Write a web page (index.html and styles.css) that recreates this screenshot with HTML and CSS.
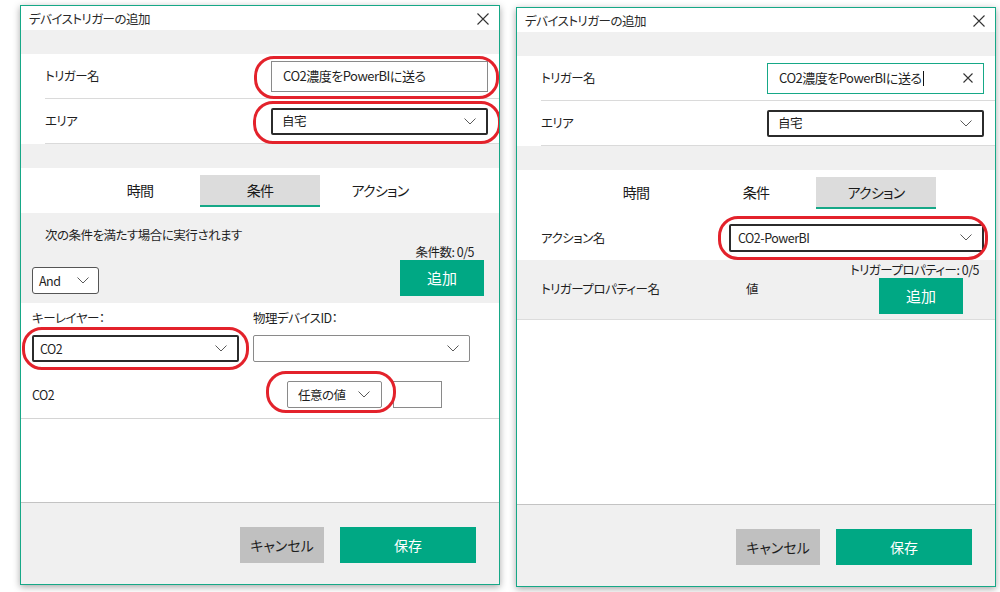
FILE: index.html
```html
<!DOCTYPE html>
<html lang="ja">
<head>
<meta charset="utf-8">
<title>デバイストリガーの追加</title>
<link rel="stylesheet" href="styles.css">
</head>
<body>
<div class="stage">

  <section class="dialog">
    <header class="titlebar">
      <span class="title">デバイストリガーの追加</span>
      <svg class="close" viewBox="0 0 12 12"><path d="M0.5 0.5 L11.5 11.5 M11.5 0.5 L0.5 11.5"/></svg>
    </header>
    <div class="band"></div>
    <div class="form">
      <div class="row">
        <span class="label">トリガー名</span>
        <div class="hl">
          <div class="input">CO2濃度をPowerBIに送る</div>
          <span class="ring ring-a"></span>
        </div>
      </div>
      <div class="row">
        <span class="label">エリア</span>
        <div class="hl">
          <div class="select dark field-w"><span>自宅</span><svg class="chev" viewBox="0 0 12 7"><path d="M0.5 0.5 L6 6 L11.5 0.5"/></svg></div>
          <span class="ring ring-b"></span>
        </div>
      </div>
    </div>
    <div class="band"></div>
    <nav class="tabs">
      <div class="tab">時間</div>
      <div class="tab active">条件</div>
      <div class="tab">アクション</div>
    </nav>
    <div class="cond-head">
      <p class="cond-desc">次の条件を満たす場合に実行されます</p>
      <div class="cond-bar">
        <div class="select and"><span>And</span><svg class="chev" viewBox="0 0 12 7"><path d="M0.5 0.5 L6 6 L11.5 0.5"/></svg></div>
        <div class="add-col">
          <span class="count">条件数: 0/5</span>
          <button class="btn btn-add">追加</button>
        </div>
      </div>
    </div>
    <div class="cond-body">
      <div class="cond-grid">
        <span class="label">キーレイヤー：</span>
        <span class="label">物理デバイスID：</span>
        <div class="hl">
          <div class="select dark key-sel"><span>CO2</span><svg class="chev" viewBox="0 0 12 7"><path d="M0.5 0.5 L6 6 L11.5 0.5"/></svg></div>
          <span class="ring ring-c"></span>
        </div>
        <div class="select dev-sel"><span></span><svg class="chev" viewBox="0 0 12 7"><path d="M0.5 0.5 L6 6 L11.5 0.5"/></svg></div>
      </div>
      <div class="cond-val">
        <span class="val-label">CO2</span>
        <div class="hl">
          <div class="select any-sel"><span>任意の値</span><svg class="chev" viewBox="0 0 12 7"><path d="M0.5 0.5 L6 6 L11.5 0.5"/></svg></div>
          <span class="ring ring-d"></span>
        </div>
        <div class="num-input"></div>
      </div>
    </div>
    <div class="fill"></div>
    <footer class="footer">
      <button class="btn btn-cancel">キャンセル</button>
      <button class="btn btn-save">保存</button>
    </footer>
  </section>

  <section class="dialog dialog-b">
    <header class="titlebar">
      <span class="title">デバイストリガーの追加</span>
      <svg class="close" viewBox="0 0 12 12"><path d="M0.5 0.5 L11.5 11.5 M11.5 0.5 L0.5 11.5"/></svg>
    </header>
    <div class="band"></div>
    <div class="form">
      <div class="row">
        <span class="label">トリガー名</span>
        <div class="input focus">
          <span>CO2濃度をPowerBIに送る</span><span class="caret"></span>
          <svg class="clear" viewBox="0 0 10 10"><path d="M0.5 0.5 L9.5 9.5 M9.5 0.5 L0.5 9.5"/></svg>
        </div>
      </div>
      <div class="row">
        <span class="label">エリア</span>
        <div class="select dark field-w"><span>自宅</span><svg class="chev" viewBox="0 0 12 7"><path d="M0.5 0.5 L6 6 L11.5 0.5"/></svg></div>
      </div>
    </div>
    <div class="band"></div>
    <nav class="tabs">
      <div class="tab">時間</div>
      <div class="tab">条件</div>
      <div class="tab active">アクション</div>
    </nav>
    <div class="action-row">
      <span class="label">アクション名</span>
      <div class="hl">
        <div class="select dark action-sel"><span>CO2-PowerBI</span><svg class="chev" viewBox="0 0 12 7"><path d="M0.5 0.5 L6 6 L11.5 0.5"/></svg></div>
        <span class="ring ring-e"></span>
      </div>
    </div>
    <div class="props">
      <div class="props-count">トリガープロパティー: 0/5</div>
      <div class="props-row">
        <span class="props-name">トリガープロパティー名</span>
        <span class="props-val">値</span>
        <button class="btn btn-add">追加</button>
      </div>
    </div>
    <div class="fill"></div>
    <footer class="footer">
      <button class="btn btn-cancel">キャンセル</button>
      <button class="btn btn-save">保存</button>
    </footer>
  </section>

</div>
</body>
</html>
```

FILE: styles.css
```css
* { box-sizing: border-box; }
html, body { margin: 0; padding: 0; background: #fff; }
body {
  width: 1000px;
  height: 592px;
  overflow: hidden;
  font-family: "Noto Sans CJK JP", "Noto Sans", sans-serif;
  font-size: 12.5px;
  line-height: 16px;
  letter-spacing: -0.5px;
  color: #1f1f1f;
  font-feature-settings: "palt";
}
.stage {
  display: flex;
  align-items: flex-start;
  gap: 16px;
  padding: 5px 0 0 20px;
}
.dialog {
  width: 480px;
  height: 580px;
  border: 1px solid #16a887;
  background: #fff;
  display: flex;
  flex-direction: column;
  box-shadow: 0 2px 7px rgba(0, 0, 0, 0.35);
  overflow: hidden;
}
.dialog-b { margin-top: 2px; }

.titlebar {
  flex: none;
  height: 24px;
  display: flex;
  align-items: center;
  justify-content: space-between;
  padding: 1px 10px 0 8px;
}
.title { font-size: 12.5px; color: #2a2a2a; }
.close { width: 12px; height: 12px; fill: none; stroke: #333; stroke-width: 1.1; }

.band { flex: none; height: 24px; background: #f0f0f0; }

.form { flex: none; }
.row {
  height: 45px;
  margin-left: 24px;
  padding-right: 11px;
  border-bottom: 1px solid #dadada;
  display: flex;
  align-items: center;
  justify-content: space-between;
}

.hl { position: relative; }
.ring {
  position: absolute;
  border: 3px solid #e3222b;
  border-radius: 20px;
  pointer-events: none;
  z-index: 2;
}
.ring-a { left: -17px; right: -11px; top: -5px; bottom: -7px; }
.ring-b { left: -18px; right: -13px; top: -7px; bottom: -9px; }
.ring-c { left: -10px; right: -10px; top: -8px; bottom: -8px; }
.ring-d { left: -21px; right: -14px; top: -10px; bottom: -5px; }
.ring-e { left: -11px; right: -4px; top: -8px; bottom: -8px; }

.input {
  width: 217px;
  height: 31px;
  border: 1px solid #8a8a8a;
  display: flex;
  align-items: center;
  padding: 0 10px 0 11px;
  background: #fff;
  font-size: 13px;
}
.input.focus { border-color: #16a887; }
.caret {
  display: inline-block;
  width: 1px;
  height: 15px;
  background: #111;
  margin-left: 1px;
}
.clear { width: 10px; height: 10px; margin-left: auto; fill: none; stroke: #333; stroke-width: 1.1; }

.select {
  height: 27px;
  display: flex;
  align-items: center;
  justify-content: space-between;
  border: 1px solid #8a8a8a;
  border-radius: 2px;
  padding: 0 10px 0 9px;
  background: #fff;
}
.select.dark { border: 2px solid #2b2b2b; }
.chev { width: 12px; height: 7px; fill: none; stroke: #5a5a5a; stroke-width: 1; flex: none; }
.field-w { width: 217px; }

.tabs {
  flex: none;
  height: 45px;
  display: flex;
  justify-content: center;
  padding-top: 7px;
}
.tab {
  width: 120px;
  height: 32px;
  display: flex;
  align-items: center;
  justify-content: center;
  font-size: 14px;
  letter-spacing: -0.7px;
  border-bottom: 2px solid transparent;
  color: #1a1a1a;
}
.tab.active { background: #dcdcdc; border-bottom-color: #16a887; }

.cond-head {
  flex: none;
  height: 90px;
  background: #f0f0f0;
  padding-top: 13px;
}
.cond-desc { margin: 0; padding-left: 24px; line-height: 18px; }
.cond-bar {
  display: flex;
  justify-content: space-between;
  align-items: flex-end;
  padding: 0 15px 0 11px;
}
.select.and { width: 67px; margin-bottom: 2px; padding: 0 9px 0 6px; border: 1px solid #555; border-radius: 3px; }
.add-col { display: flex; flex-direction: column; align-items: flex-end; }
.count { margin-right: 10px; line-height: 16px; }

.btn {
  font: inherit;
  border: none;
  height: 36px;
  padding: 0;
  display: flex;
  align-items: center;
  justify-content: center;
}
.btn-add { width: 84px; background: #00a884; color: #fff; font-size: 15px; }

.cond-body {
  flex: none;
  padding: 7px 0 10px 11px;
  border-bottom: 1px solid #d4d4d4;
}
.cond-grid {
  display: grid;
  grid-template-columns: 207px 217px;
  column-gap: 14px;
  row-gap: 9px;
}
.key-sel { width: 207px; padding-left: 6px; }
.dev-sel { width: 217px; }
.cond-val { display: flex; align-items: center; margin-top: 19px; }
.val-label { width: 255px; }
.any-sel { width: 95px; padding: 0 11px 0 10px; }
.num-input { width: 49px; height: 27px; border: 1px solid #8a8a8a; margin-left: 11px; background: #fff; }

.fill { flex: 1; }

.footer {
  flex: none;
  height: 82px;
  background: #f0f0f0;
  border-top: 1px solid #c3c3c3;
  display: flex;
  justify-content: flex-end;
  align-items: flex-start;
  gap: 16px;
  padding: 24px 23px 0 0;
}
.btn-cancel { width: 84px; background: #c0c0c0; color: #1e1e1e; font-size: 14px; }
.btn-save { width: 136px; background: #00a884; color: #fff; font-size: 14px; }

.action-row {
  flex: none;
  height: 45px;
  display: flex;
  align-items: center;
  justify-content: space-between;
  padding: 0 11px 0 24px;
}
.action-sel { width: 255px; height: 28px; padding-left: 7px; }

.props {
  flex: none;
  background: #f0f0f0;
  border-bottom: 1px solid #dcdcdc;
  padding: 2px 0 5px 24px;
}
.props-count { text-align: right; padding-right: 16px; }
.props-row { display: flex; align-items: flex-start; padding-right: 32px; }
.props-name { width: 205px; margin-top: 3px; }
.props-val { margin-top: 3px; }
.props-row .btn-add { margin-left: auto; }
```
